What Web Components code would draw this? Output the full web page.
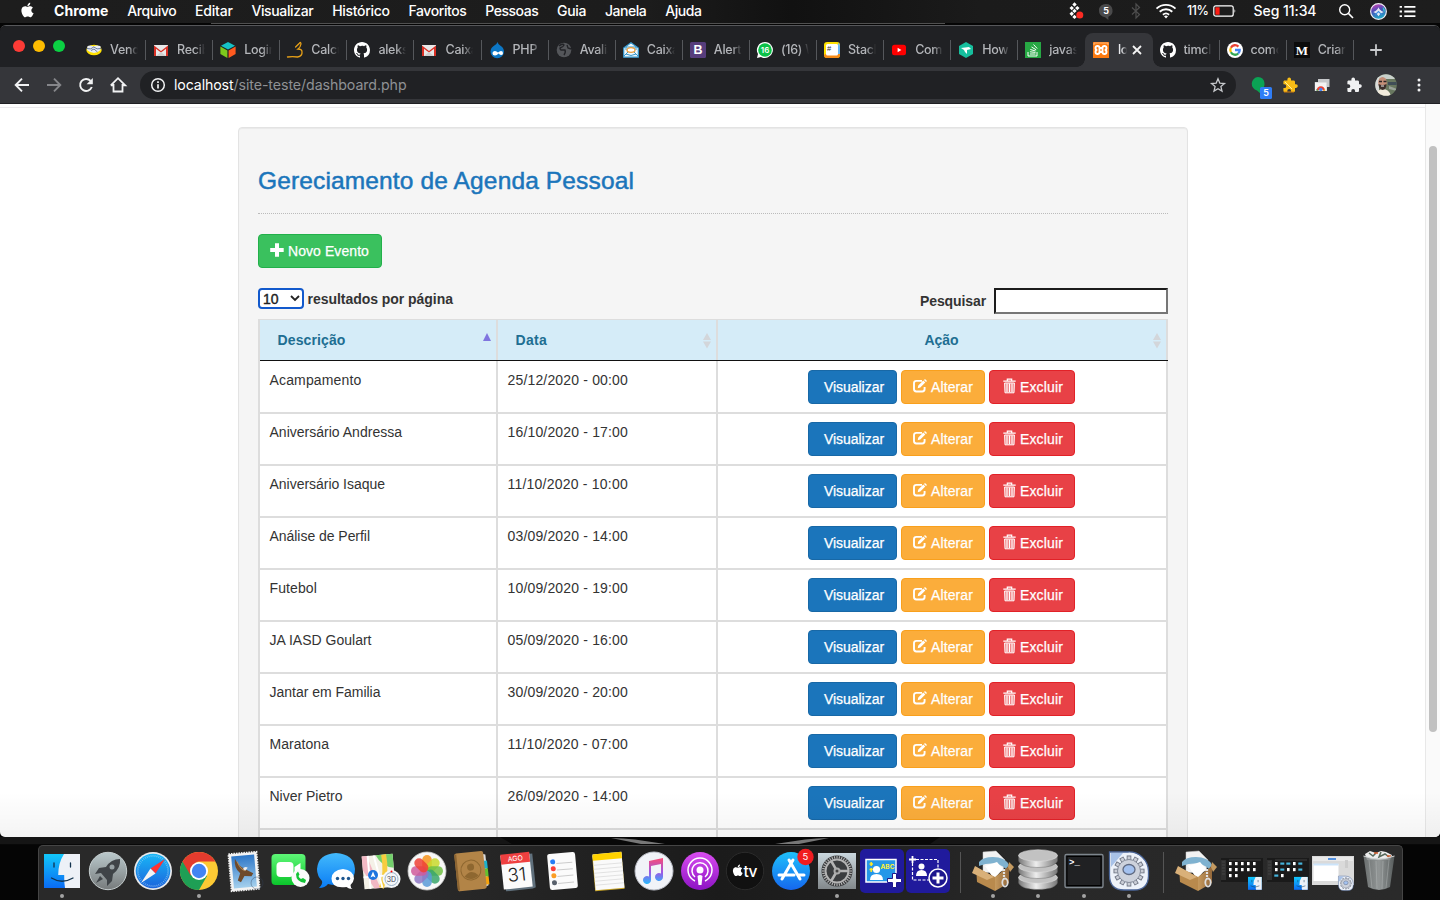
<!DOCTYPE html>
<html lang="pt-BR">
<head>
<meta charset="utf-8">
<title>Agenda Pessoal</title>
<style>
html,body{margin:0;padding:0;width:1440px;height:900px;overflow:hidden;background:#050505}
body{font-family:"Liberation Sans",Arial,sans-serif}
</style>
</head>
<body>
<mac-desktop></mac-desktop>
<script>
const MAC_FONT = 'Inter,"Liberation Sans",sans-serif';

const gmail = '<path d="M1 3h14v11H1z" fill="#e8e8e8"/><path d="M1 14V3.6L8 9l7-5.4V14h-2V6.8L8 10.6 3 6.8V14z" fill="#d93025"/><path d="M3 14h10L8 10z" fill="#cfcfcf"/>';
const github = '<path fill="#fff" d="M8 0C3.58 0 0 3.58 0 8c0 3.54 2.29 6.53 5.47 7.59.4.07.55-.17.55-.38v-1.49c-2.01.37-2.53-.49-2.69-.94-.09-.23-.48-.94-.82-1.13-.28-.15-.68-.52-.01-.53.63-.01 1.08.58 1.23.82.72 1.21 1.87.87 2.33.66.07-.52.28-.87.51-1.07-1.78-.2-3.64-.89-3.64-3.95 0-.87.31-1.59.82-2.15-.08-.2-.36-1.02.08-2.12 0 0 .67-.21 2.2.82A7.6 7.6 0 0 1 8 3.86c.68 0 1.36.09 2 .27 1.53-1.04 2.2-.82 2.2-.82.44 1.1.16 1.92.08 2.12.51.56.82 1.27.82 2.15 0 3.07-1.87 3.75-3.65 3.95.29.25.54.73.54 1.48v2.2c0 .21.15.46.55.38A8.01 8.01 0 0 0 16 8c0-4.42-3.58-8-8-8z"/>';
const puzzle = '<path d="M14 7.3h-1V4.8c0-.8-.6-1.4-1.4-1.4H9V2.3a1.8 1.8 0 0 0-3.6 0v1.1H2.7c-.8 0-1.3.6-1.3 1.4v2.5h1a1.9 1.9 0 0 1 0 3.8h-1v2.6c0 .8.6 1.3 1.3 1.3h2.6v-1a1.9 1.9 0 0 1 3.8 0v1h2.5c.8 0 1.4-.5 1.4-1.3v-2.8h1a1.8 1.8 0 0 0 0-3.6z"/>';
const apple = '<path d="M11.6 8.5c0-1.7 1.4-2.5 1.5-2.6-.8-1.2-2.1-1.4-2.5-1.4-1.1-.1-2.1.6-2.6.6-.6 0-1.400-.6-2.300-.6C4.500 4.500 3.400 5.200 2.800 6.200c-1.200 2.100-.3 5.200.9 6.900.6.8 1.300 1.800 2.200 1.700.9 0 1.200-.6 2.300-.6s1.400.6 2.300.6c1 0 1.600-.8 2.200-1.700.7-1 1-1.900 1-2-.1 0-2.100-.7-2.100-2.600zM9.900 3.400c.5-.6.8-1.400.7-2.200-.7 0-1.500.5-2 1.100-.5.500-.8 1.300-.7 2.100.7.1 1.500-.4 2-1z"/>';
const finderFace = (s='') => `<g ${s}><defs><linearGradient id="fa" x1="0" y1="0" x2="0" y2="1"><stop stop-color="#12c8fb"/><stop offset="1" stop-color="#0a6bf3"/></linearGradient></defs><path d="M4 5h36v34H4z" fill="url(#fa)"/><path d="M24 5h16v34H25q-1-6-.8-13h-6q0-12 5.800-21z" fill="#edf1f7"/><path d="M14 14v4M30.500 14v4" stroke="#12324e" stroke-width="1.300" stroke-linecap="round"/><path d="M11.500 29q10.500 6.500 21.500 0" fill="none" stroke="#12324e" stroke-width="1.300" stroke-linecap="round"/></g>`;
const petals = ['#f7941d','#c9d92c','#71bf44','#3aa66b','#5b9bd8','#8f78c6','#d05b9b','#ef4136'].map((c,i)=>`<rect x="17.200" y="6" width="9.600" height="16" rx="4.800" fill="${c}" opacity=".85" transform="rotate(${i*45} 22 22)"/>`).join('');
const ticks = (n,r1,r2,c,w)=>Array.from({length:n},(_,i)=>`<path d="M22 ${22-r1}V${22-r2}" stroke="${c}" stroke-width="${w}" transform="rotate(${i*360/n} 22 22)"/>`).join('');
const box = '<defs><linearGradient id="bx" x1="0" x2="1"><stop stop-color="#c69a5e"/><stop offset="1" stop-color="#94683a"/></linearGradient></defs><path d="M12 3l13-1 9 9-2 11-20 2z" fill="#f2f2f2" stroke="#c9c9c9" stroke-width=".5"/><path d="M8 13q4-5 14-5 12 0 16 8l-3 4q-10-9-27-3z" fill="#7fb2d0"/><path d="M14 17l12-4 6 7-9 10z" fill="#fff"/><path d="M5 18l19 10v14L6 33z" fill="#b98a4d"/><path d="M24 28l14-11v17L24 42z" fill="url(#bx)"/><path d="M4 17l19 11-7 3L1 24z" fill="#d9b079"/><path d="M38 13l5 5-4 5-2-5z" fill="#c49a60"/><path d="M33 20v10" stroke="#e2e2e2" stroke-width="2.200" stroke-dasharray="2 1"/><ellipse cx="34" cy="33.500" rx="2.700" ry="4" fill="none" stroke="#ddd" stroke-width="1.800"/>';
const cog = '<path d="M2.500 3H21A19.500 19.500 0 0 1 41.500 22V27Q41 41 27 41H17Q2.500 41 2.500 26z" fill="#edf2fa" stroke="#4b6699" stroke-width="1.300"/><path d="M4 4h12L4 18z" fill="#a8c2e8"/>'+ticks(12,15.500,11,'#6c7280',4.600)+ticks(12,14.600,10,'#c9cdd6',3)+'<circle cx="22" cy="22" r="11.500" fill="#cdd2dc" stroke="#747b8b" stroke-width=".8"/><ellipse cx="22" cy="20.500" rx="6" ry="5" fill="#a3c1ef" stroke="#5f6a82" stroke-width="1.300"/>';
const grid = blue => '<rect x="1" y="9" width="42" height="24" fill="#1a1a1a"/><path d="M1 11h5v20H1z" fill="#303030"/><path d="M2 13h3M2 16h3M2 19h3M2 22h3M2 25h3M9 11h32" stroke="#4a4a4a" stroke-width=".8"/>' +
  [0,1,2].map(r=>Array.from({length:r<2?5:2},(_,c)=>{const b=blue.includes(r*5+c);return `<rect x="${9+c*6-(b?.7:0)}" y="${13+r*6+(b?.5:0)}" width="${b?4:2.600}" height="${b?2.200:3.200}" fill="${b?'#45b4dc':'#fff'}"/>`}).join('')).join('') + finderFace('transform="translate(26.500 26) scale(.38)"');

/* name: [viewBox, markup] */
const ICONS = {
 apple:['0 0 16 16','<g fill="#fff">'+apple+'</g>'],
 meli:['0 0 16 16','<ellipse cx="8" cy="8" rx="7.700" ry="5.300" fill="#ffe100"/><path d="M1.500 4q3-1.300 6 .5 3-1.800 7-.5v4q-3 3-6.500 3T1 8z" fill="#e9edf5"/><path d="M.8 6.500q4 1.500 7-1.500 3 3 7.400 1.500M5 8.500l3-1.500 3.500 3" fill="none" stroke="#4a618c" stroke-width=".8"/>'],
 gmail:['0 0 16 16',gmail],
 cube:['0 0 16 16','<path d="M8 0l7 3.700-7 3.900L1 3.700z" fill="#15c2c6"/><path d="M.4 4.400l7 4v7.500l-7-4z" fill="#7ec81c"/><path d="M15.600 4.400l-7 4v7.500l7-4z" fill="#ff5a1f"/>'],
 calc:['0 0 16 16','<path d="M.5 15q5-.8 10 0 5-1 4.500-5 0-3-4-3 2.500-2 3-5-.2-2.500-1.600-.8L8.600 5" fill="none" stroke="#e59f18" stroke-width="1.300" stroke-linecap="round"/>'],
 github:['0 0 16 16',github],
 drupal:['0 0 16 16','<path d="M8.500 0q.5 2.300 3.300 4Q15 6 15 9.800A6.600 6.200 0 0 1 1.500 9.800Q1.500 6 5 3.800 8 2 8.500 0z" fill="#0c76c4"/><path d="M3.500 11.500q0-2.500 2.500-2.500 1.500 0 3 1.500Q10.500 9 12 9q2 0 2 2.200 0 1.800-1.500 1.800-1.500 0-3-1.500-1.500 2-3.500 2-2.500 0-2.500-2z" fill="#fff"/>'],
 globe:['0 0 16 16','<circle cx="8" cy="8" r="7.300" fill="#54565a"/><path d="M3 4q4-3 5-1-1 2-3 2.500t0 2.500h4q1 2-1 5M11 3l1 3 3 1" stroke="#222327" fill="none" stroke-width="1.400"/>'],
 mail:['0 0 16 16','<path d="M.7 6L8 .8 15.300 6v9.200H.7z" fill="#eef8fd" stroke="#3596cc" stroke-width="1.200"/><path d="M3 8V5h10v3M1 14l4-4m10 4l-4-4" stroke="#3596cc" fill="none"/><ellipse cx="8" cy="8" rx="4" ry="2.300" fill="#fff" stroke="#eb9d3c" stroke-width="1.300"/><path d="M3 12q5 3 10 0" stroke="#3596cc" fill="none"/>'],
 boot:['0 0 16 16','<rect width="16" height="16" rx="1.500" fill="#563d7c"/><text x="8" y="12.300" font-size="12.500" font-weight="700" text-anchor="middle" fill="#fff" font-family="Liberation Sans">B</text>'],
 whats:['0 0 16 16','<path d="M8 0a8 8 0 1 1-4 15L0 16l1-4A8 8 0 0 1 8 0z" fill="#fff"/><circle cx="8" cy="8" r="6.800" fill="#0bc148"/><text x="8" y="11" font-size="8" font-weight="600" text-anchor="middle" fill="#fff" font-family="Inter">16</text>'],
 stackh:['0 0 16 16','<rect width="16" height="16" rx="3" fill="#ffe100"/><path d="M3 16a3 3 0 0 1-3-3l3-2h13v2a3 3 0 0 1-3 3z" fill="#f58a17"/><path d="M14 1q2 1 2 3v8h-2z" fill="#67b6f3"/><rect x="2" y="2" width="12" height="11.500" rx="1.500" fill="#fff"/><text x="3" y="9" font-size="7.500" fill="#333" font-family="Liberation Sans">#</text>'],
 yt:['0 0 16 16','<rect x="1" y="2.700" width="14" height="10.600" rx="2.500" fill="#f00"/><path d="M6.600 5.700v4.600L10.400 8z" fill="#fff"/>'],
 how:['0 0 16 16','<path d="M8 0l7 4v8l-7 4-7-4V4z" fill="#16bf9d"/><path d="M3 6l8-1 2 2-4 1v4L7 10l-1-2z" fill="#fff"/>'],
 so:['0 0 16 16','<path d="M0 0h16v16H0z" fill="#27a844"/><path d="M3 10v4h9v-4M5 12h5.500M5 9.800l5.500.6M5.300 7.500l5.300 1.500M6.500 5l4.700 2.800M8.500 2.500l3.700 4" fill="none" stroke="#fff" stroke-width="1"/>'],
 xampp:['0 0 16 16','<path d="M0 0h16v16H0z" fill="#fb7a10"/><path d="M1 3V1h14v2" stroke="#ffc793" fill="none" stroke-width=".8"/><path d="M6.500 6v4h3V6zM6.500 6a2 2 0 1 0-2.300 2 2 2 0 1 0 2.300 2M9.500 6a2 2 0 1 1 2.300 2 2 2 0 1 1-2.300 2" fill="none" stroke="#fff" stroke-width="1.900"/>'],
 google:['0 0 16 16','<circle cx="8" cy="8" r="8" fill="#fff"/><g fill="none" stroke-width="2.300"><path d="M11.400 4.600A4.700 4.700 0 0 0 3.900 5.700" stroke="#ea4335"/><path d="M3.900 5.700a4.700 4.700 0 0 0 0 4.600" stroke="#fbbc05"/><path d="M3.900 10.300a4.700 4.700 0 0 0 7.300 1.200" stroke="#34a853"/><path d="M11.200 11.500A4.500 4.500 0 0 0 12.700 8H8" stroke="#4285f4"/></g>'],
 medium:['0 0 16 16','<path d="M0 0h16v16H0z" fill="#0b0b0b"/><text x="8" y="12.500" font-size="13" font-weight="700" text-anchor="middle" fill="#fff" font-family="Liberation Serif">M</text>'],
 plus:['0 0 16 16','<path d="M8 2.200v11.600M2.200 8h11.600" stroke="#c8cacd" stroke-width="1.800"/>'],
 x:['0 0 14 14','<path d="M3 3l8 8m0-8l-8 8" stroke="#f4f4f4" stroke-width="1.800"/>'],
 back:['0 0 16 16','<path d="M15 8H2M8 1.700L1.700 8 8 14.300" fill="none" stroke="#f1f2f3" stroke-width="1.900"/>'],
 fwd:['0 0 16 16','<path d="M1 8h13M8 1.700L14.300 8 8 14.300" fill="none" stroke="#85868a" stroke-width="1.900"/>'],
 reload:['0 0 16 16','<path d="M13.800 10A6 6 0 1 1 12.600 3.900" fill="none" stroke="#f1f2f3" stroke-width="1.900"/><path d="M14.800 1v6.200H8.600z" fill="#f1f2f3"/>'],
 home:['0 0 16 16','<path d="M3.500 7v7.500h9V7M.8 8.300L8 1.200l7.200 7.100H12.500M3.500 8.300H.8" fill="none" stroke="#f1f2f3" stroke-width="1.800"/>'],
 info:['0 0 16 16','<circle cx="8" cy="8" r="6.300" fill="none" stroke="#f1f2f3" stroke-width="1.500"/><path d="M8 7.200v4.300M8 4.300v1.700" stroke="#f1f2f3" stroke-width="1.700"/>'],
 star:['0 0 16 16','<path d="M8 1.800l1.800 4.300 4.700.4-3.600 3.100 1.100 4.500L8 11.700l-4 2.400 1.100-4.500-3.600-3.100 4.700-.4z" fill="none" stroke="#c7c9cc" stroke-width="1.300"/>'],
 green:['0 0 22 22','<path d="M7 0a6.800 6.800 0 0 1 2 13.200L10 17 6 13.400A6.800 6.800 0 0 1 7 0z" fill="#0ba354"/><rect x="9" y="10" width="12" height="12" rx="1.500" fill="#2f7df6"/><text x="15" y="19.300" font-size="9" font-weight="600" text-anchor="middle" fill="#fff" font-family="Inter">5</text>'],
 ypuzzle:['0 0 16 16','<g fill="#f9bd16">'+puzzle+'</g><path d="M3 5l7 7" stroke="#fff09a"/><path d="M2 15h10" stroke="#cf7d10"/>'],
 cards:['0 0 16 16','<path d="M4 2h11.500v8H13v4H.8V5H4z" fill="#c6c8ca"/><path d="M1 5.500h11.500v8.300H1z" fill="#f3f3f3"/><path d="M2.500 13.500a4.300 4.300 0 0 1 8.600 0H9a2.300 2.300 0 0 0-4.400 0z" fill="#ea4335"/><circle cx="6.800" cy="12.500" r="1.700" fill="#4285f4"/><path d="M2.500 13.800v-2l2 2z" fill="#34a853"/><path d="M11.100 13.800v-2l-2 2z" fill="#fbbc05"/>'],
 puzzle:['0 0 16 16','<g fill="#f0f1f2">'+puzzle+'</g>'],
 avatar:['0 0 22 22','<defs><clipPath id="c"><circle cx="11" cy="11" r="10.800"/></clipPath></defs><g clip-path="url(#c)"><path d="M0 0h22v22H0z" fill="#68775f"/><path d="M0 0h22v5H0z" fill="#c9d1cb"/><path d="M0 22V4l4-1v19z" fill="#d9dbd9"/><path d="M13 8h9v3h-9z" fill="#3f4d57"/><path d="M14 12l8 3v2l-8-2z" fill="#9aa39a"/><path d="M1 22q1-7 7-7t8 7z" fill="#f3ecdd"/><ellipse cx="7.500" cy="8.500" rx="4.300" ry="5.500" fill="#c58f78"/><path d="M3.500 10q4 2 8 0 0 5.500-4 6-4-1-4-6z" fill="#3d2f2b"/><path d="M4 7.500h3m1.500 0h3" stroke="#2a2424" stroke-width="1.500"/><path d="M6 12h3" stroke="#eee"/></g>'],
 dots:['0 0 16 16','<g fill="#f1f2f3"><circle cx="8" cy="3" r="1.500"/><circle cx="8" cy="8" r="1.500"/><circle cx="8" cy="13" r="1.500"/></g>'],
 tiles:['0 0 16 18','<g fill="#fff"><path d="M5.500 .3l2.200 2.200-2.200 2.200-2.200-2.200zM2.700 3.900l2.200 2.200-2.200 2.200L.5 6.100zM8.300 3.900l2.200 2.200-2.200 2.200-2.200-2.200zM5.500 6.700l2.200 2.200-2.200 2.200-2.200-2.200zM2.700 9.500l2.200 2.200-2.200 2.200-2.200-2.200zM5.500 12.700l2.200 2.200-2.200 2.200-2.200-2.200z"/></g><circle cx="10.800" cy="13" r="3.500" fill="#fb2b23"/>'],
 badge5:['0 0 16 18','<path d="M8 1a7 7 0 0 1 2.500 13.500V18L7 15A7 7 0 0 1 8 1z" fill="#4a4a4b"/><text x="8" y="11.500" font-size="9.500" font-weight="700" text-anchor="middle" fill="#fff" font-family="Inter">5</text>'],
 bt:['0 0 12 16','<path d="M2 4.500l7.500 7L6 15V1l3.500 3.500-7.500 7" fill="none" stroke="#4e4e4e" stroke-width="1.200"/>'],
 wifi:['0 0 22 16','<g fill="none" stroke="#fff" stroke-width="1.900"><path d="M1.500 5.600a14 14 0 0 1 19 0M4.700 8.700a9.400 9.400 0 0 1 12.600 0M7.900 11.700a4.800 4.800 0 0 1 6.200 0"/></g><path d="M11 15.500l-2-2.200q2-1.500 4 0z" fill="#fff"/>'],
 battery:['0 0 24 14','<rect x=".8" y="1.800" width="19.400" height="10.400" rx="2" fill="none" stroke="#fff" stroke-width="1.200"/><rect x="2.400" y="3.300" width="4.200" height="7.400" fill="#ff1c13"/><path d="M21.500 5q1.800 2 0 4z" fill="#fff"/>'],
 search:['0 0 16 16','<circle cx="6.700" cy="6.700" r="5" fill="none" stroke="#fff" stroke-width="1.400"/><path d="M10.400 10.400l4.600 4.600" stroke="#fff" stroke-width="1.600"/>'],
 siri:['0 0 16 16','<defs><linearGradient id="s" x2=".3" y2="1"><stop stop-color="#e23bb0"/><stop offset=".5" stop-color="#4a4fb8"/><stop offset="1" stop-color="#21a6c6"/></linearGradient></defs><circle cx="8" cy="8" r="7.400" fill="url(#s)" stroke="#ededf4" stroke-width="1.100"/><path d="M12 3.500q2.500 2 2 5-2-1-2-5z" fill="#35d3cb"/><path d="M8 4q1 3 5 4.500-3.500 1-5 4-1.500-3-5-4Q7 7 8 4z" fill="#fff" opacity=".85"/><path d="M5 11l3-3 3 3" stroke="#3c8fe0" fill="none"/>'],
 list:['0 0 18 14','<path d="M5 2h12M5 7h12M5 12h12" stroke="#fff" stroke-width="2"/><path d="M0 2h2.500M0 7h2.500M0 12h2.500" stroke="#fff" stroke-width="2"/>'],
 gplus:['0 0 14 14','<path d="M5 .2h4V5h4.700v4H9v4.800H5V9H.2V5H5z" fill="#fff"/>'],
 gedit:['0 0 14 14','<path d="M9 1.900H3.400Q1 1.900 1 4.200v5.900q0 2.400 2.400 2.400h5.900q2.300 0 2.300-2.400V8" fill="none" stroke="#fff" stroke-width="1.900"/><path d="M5.300 6.600l5-5 2 2-5 5-2.600.6zM11 1l1-1 2 2-1 1z" fill="#fff"/>'],
 gtrash:['0 0 13 16','<path d="M.3 3.200h12.400M4.300 2.700V1.200h4.400v1.500" fill="none" stroke="#fff" stroke-width="1.200"/><path d="M1.600 5h9.800l-.4 9.800H2z" fill="#fff" fill-opacity=".35" stroke="#fff" stroke-width="1"/><path d="M4 5.500v8.500M6.500 5.500v8.500M9 5.500v8.500" stroke="#fff" stroke-width="1.100"/>'],
 chev:['0 0 10 8','<path d="M1 2l4 4 4-4" fill="none" stroke="#222" stroke-width="1.800"/>'],
 /* dock */
 finder:['0 0 44 44',finderFace()],
 rocket:['0 0 44 44','<defs><linearGradient id="r" x1="0" y1="0" x2="0" y2="1"><stop stop-color="#bac9cc"/><stop offset="1" stop-color="#777b7c"/></linearGradient></defs><circle cx="22" cy="22" r="18.700" fill="url(#r)" stroke="#c4cccd" stroke-width="1"/><path d="M34 10q-9 0-14 8l-7 1-4 6 6-1 6 7 0 6 5-5 1-7q8-6 7-15z" fill="#3f4448"/><path d="M14 27l-4 7 7-4z" fill="#3f4448"/><circle cx="26" cy="18" r="2.500" fill="#96a0a3"/>'],
 safari:['0 0 44 44','<defs><linearGradient id="sf" x1="0" y1="0" x2="0" y2="1"><stop stop-color="#18b7f7"/><stop offset="1" stop-color="#1c64dc"/></linearGradient></defs><circle cx="22" cy="22" r="19" fill="#e9eaec"/><circle cx="22" cy="22" r="17.300" fill="url(#sf)"/>'+ticks(48,16,14.3,'#b9e2fa',.5)+'<path d="M34 10L24.500 24.500l-5-5z" fill="#f33"/><path d="M10 34l9.500-14.500 5 5z" fill="#f4f4f4"/>'],
 chrome:['0 0 44 44','<circle cx="22" cy="22" r="19" fill="#fcc934"/><path d="M22 22L5.500 12.500A19 19 0 0 0 22 41l8-14z" fill="#1e9f55"/><path d="M5.500 12.500A19 19 0 0 1 38.500 12.500H22q-6 0-8.200 14.200z" fill="#e33b2e"/><circle cx="22" cy="22" r="9" fill="#fff"/><circle cx="22" cy="22" r="7.200" fill="#4284f3"/>'],
 stamp:['0 0 44 44','<defs><linearGradient id="st" x1="0" y1="0" x2="0" y2="1"><stop stop-color="#2d77c8"/><stop offset="1" stop-color="#a5d0ed"/></linearGradient></defs><g transform="rotate(-5 22 22)"><rect x="8" y="4" width="28" height="37" fill="#f3f3f3" stroke="#f3f3f3" stroke-width="2" stroke-dasharray="1.500 1"/><rect x="10.500" y="6.500" width="23" height="32" fill="url(#st)"/><path d="M14 9q3 8 9 11l8 5-2 3-7-1-4 6-3-2 3-7q-6-6-4-15z" fill="#6e4a2c"/><path d="M21 20q2-3 5-1l-3 3z" fill="#eee"/><path d="M16 12q2 7 7 10" stroke="#b18a58" fill="none"/></g><circle cx="35" cy="34" r="6" fill="none" stroke="#33425a" opacity=".4"/>'],
 facetime:['0 0 44 44','<defs><linearGradient id="ft" x1="0" y1="0" x2="0" y2="1"><stop stop-color="#5ef777"/><stop offset="1" stop-color="#0bc52b"/></linearGradient></defs><rect x="3.500" y="5" width="34" height="31" rx="4" fill="url(#ft)"/><rect x="8.500" y="13" width="17" height="15" rx="4" fill="#fff"/><path d="M26.500 18l6-4v13l-6-4z" fill="#fff"/><circle cx="32.500" cy="29" r="9" fill="#fafafa"/><path d="M28 25q0 8 9 9l1-3-3-2-2 1q-2-1-2.500-3l1-1.500-1.500-3z" fill="#12c436"/>'],
 messages:['0 0 44 44','<defs><linearGradient id="ms" x1="0" y1="0" x2="0" y2="1"><stop stop-color="#43bafc"/><stop offset="1" stop-color="#0a7cf5"/></linearGradient></defs><path d="M22 4q18 1 19 16 0 15-19 16-5 0-8-1-3 4-9 4 4-4 3-7Q3 27 3 20 4 5 22 4z" fill="url(#ms)"/><path d="M29 20q10.500 1 11 9.500-.5 4-3.500 6.500 0 3 2 4-4 0-6-2-15 2-15-8.500Q18 21 29 20z" fill="#fff"/><g fill="#1d568f"><circle cx="23.500" cy="29.500" r="1.700"/><circle cx="29" cy="29.500" r="1.700"/><circle cx="34.500" cy="29.500" r="1.700"/></g>'],
 maps:['0 0 44 44','<g transform="rotate(-5 20 22)"><rect x="4" y="6" width="31" height="33" fill="#f4f1e7"/><path d="M4 6h5l11 33h-6L4 20z" fill="#f2b8c4"/><path d="M18 6h17v14q-12-2-17-14z" fill="#74cf6c"/><path d="M26 6q2 18-5 33" stroke="#f7cc40" stroke-width="5" fill="none"/><path d="M10 6v33M16 6l6 33" stroke="#fff" stroke-width="2"/><path d="M4 27h31" stroke="#fff" stroke-width="2"/></g><circle cx="14" cy="26" r="5" fill="#1c74df"/><path d="M14 22.500l2.500 6-2.500-1.200-2.500 1.200z" fill="#fff"/><circle cx="32.500" cy="30" r="9" fill="#f5f7f9"/><circle cx="32.500" cy="30" r="6.500" fill="none" stroke="#9db3c8"/><text x="32.500" y="32.500" font-size="7" text-anchor="middle" fill="#445" font-family="Inter">3D</text><circle cx="32.500" cy="22.500" r="1" fill="red"/>'],
 photos:['0 0 44 44','<circle cx="22" cy="22" r="19" fill="#f8f8f8" stroke="#c9c9c9" stroke-width=".8"/>'+petals],
 contacts:['0 0 44 44','<g transform="rotate(-6 22 22)"><path d="M31 5l6 2v31l-6 2z" fill="#ddd"/><path d="M32 13h6v8h-6z" fill="#1cb1cb"/><path d="M32 21h6v8h-6z" fill="#63c12f"/><path d="M32 29h6v8h-6z" fill="#f7a40c"/><rect x="6" y="3" width="29" height="38" rx="2" fill="#b28447"/><path d="M7 4v36" stroke="#8b6432" stroke-width="2"/><circle cx="21" cy="21" r="10" fill="none" stroke="#8e6730" stroke-width="1"/><circle cx="21" cy="18" r="3.500" fill="#8e6730"/><path d="M14 27q7-8 14 0-7 6-14 0z" fill="#8e6730"/></g>'],
 calendar:['0 0 44 44','<g transform="rotate(-6 22 22)"><path d="M8 6h30v34l-3 1H8z" fill="#60707c"/><rect x="6" y="5" width="29" height="34" fill="#fbfbfb"/><rect x="6" y="4" width="29" height="10" fill="#ef4040"/><text x="20.500" y="11.800" font-size="7" fill="#fff" text-anchor="middle" font-family="Inter">AGO</text><text x="20.500" y="32" font-size="18.500" font-weight="300" fill="#222" text-anchor="middle" font-family="Inter">31</text></g>'],
 reminders:['0 0 44 44','<g transform="rotate(-5 22 22)"><rect x="7.500" y="4" width="28" height="36" rx="2.500" fill="#fbfbfb"/><path d="M16 14h16M16 20.500h16M16 27h16M16 34h16" stroke="#ccc"/><circle cx="12.500" cy="12" r="2.500" fill="#257cf5"/><circle cx="12.500" cy="19" r="2.500" fill="#fb3f38"/><circle cx="12.500" cy="26" r="2.500" fill="#fb9d24"/><circle cx="12.500" cy="33" r="2.500" fill="#59616c"/></g>'],
 notes:['0 0 44 44','<g transform="rotate(-5 22 22)"><rect x="6.500" y="5" width="29.500" height="36" fill="#c9a526"/><rect x="7" y="4" width="29" height="36" fill="#fafafa"/><path d="M7 4h29v6.500H7z" fill="#ffd200"/><path d="M7 15h29M7 19h29M7 23h29M7 27h29M7 31h29M7 35h29" stroke="#d8d8d8" stroke-width=".7"/></g>'],
 music:['0 0 44 44','<defs><linearGradient id="mu" x1="0" y1="0" x2="0" y2="1"><stop stop-color="#fa4b74"/><stop offset=".55" stop-color="#9d57e6"/><stop offset="1" stop-color="#27b9fb"/></linearGradient></defs><circle cx="22" cy="22" r="19" fill="#f1f3f8" stroke="#bcbfc8"/><path d="M17 12l14-3v19a4 4 0 1 1-2-3.500V15l-10 2v14a4 4 0 1 1-2-3.500z" fill="url(#mu)"/>'],
 podcasts:['0 0 44 44','<defs><linearGradient id="po" x1="0" y1="0" x2="0" y2="1"><stop stop-color="#d94cf0"/><stop offset="1" stop-color="#8d14c4"/></linearGradient></defs><circle cx="22" cy="22" r="19" fill="url(#po)"/><g fill="none" stroke="#fff" stroke-width="1.500"><path d="M17 32a12 12 0 1 1 10 0"/><path d="M17 28a8 8 0 1 1 10 0"/></g><circle cx="22" cy="21" r="3.500" fill="#fff"/><path d="M19.500 27q2.500-2 5 0l-1 9h-3z" fill="#fff"/>'],
 tv:['0 0 44 44','<circle cx="22" cy="22" r="18.700" fill="#111" stroke="#2b2b2b"/><g fill="#fff" transform="translate(8 14.500) scale(.85)">'+apple+'</g><text x="20.500" y="27.500" font-size="15.500" font-weight="500" fill="#fff" font-family="Inter" letter-spacing="-.5">tv</text>'],
 appstore:['0 0 44 44','<defs><linearGradient id="as" x1="0" y1="0" x2="0" y2="1"><stop stop-color="#1fc1fb"/><stop offset="1" stop-color="#1567ee"/></linearGradient></defs><circle cx="22" cy="22" r="19" fill="url(#as)"/><path d="M24 11L13 30M20 11l11 19M10 26h15m4 0h6" stroke="#fff" stroke-width="3" stroke-linecap="round"/><circle cx="36.500" cy="8" r="8.200" fill="#f11c20"/><text x="36.500" y="11.300" font-size="9.500" fill="#fff" text-anchor="middle" font-family="Inter">5</text>'],
 settings:['0 0 44 44','<defs><linearGradient id="se" x1="0" y1="0" x2="0" y2="1"><stop stop-color="#cbd8df"/><stop offset="1" stop-color="#82888b"/></linearGradient></defs><rect x="3" y="4" width="38" height="36" fill="url(#se)"/><circle cx="22" cy="22" r="15.500" fill="#3b3d3f"/>'+ticks(36,15,12.5,'#bcbcbc',1)+'<circle cx="22" cy="22" r="11.500" fill="none" stroke="#b4b4b4" stroke-width="2"/><g stroke="#b4b4b4" stroke-width="2.500"><path d="M22 22h11M22 22l-5.500 9.500M22 22l-5.500-9.500"/></g><circle cx="22" cy="22" r="3.500" fill="#aaa"/><circle cx="22" cy="22" r="1.500" fill="#444"/>'],
 idcard:['0 0 44 44','<rect width="44" height="44" rx="5" fill="#201a9c"/><rect x="6" y="10.500" width="30" height="22.500" fill="#2597e8" stroke="#fff" stroke-width="1.500"/><circle cx="16.500" cy="20.500" r="3.600" fill="#fff"/><path d="M10 31q0-6 6.500-6t6.500 6z" fill="#fff"/><text x="20.500" y="20" font-size="6.500" font-weight="700" fill="#fff034" font-family="Inter">ABC</text><path d="M9.500 15h3.500M11.200 13v4M9.500 20.500h3.500M11.200 19v4" stroke="#ffe925" stroke-width="1.500"/><path d="M32.500 24.500h4v5h5v4h-5v5h-4v-5h-5v-4h5z" fill="#fff" stroke="#1d168d" stroke-width="1"/>'],
 idadd:['0 0 44 44','<rect width="44" height="44" rx="5" fill="#201a9c"/><path d="M6.500 14v17h17M10 10.500h22v12" fill="none" stroke="#fff" stroke-width="1.200" stroke-dasharray="3 1.500"/><path d="M3 10.500h7M6.500 7v7" stroke="#fff" stroke-width="1.800"/><circle cx="15.500" cy="17.500" r="3" fill="#fff"/><path d="M10 27q0-6 5.500-6t5.500 6z" fill="#fff"/><circle cx="32" cy="29" r="9" fill="#1d178f" stroke="#fff" stroke-width="1.500"/><path d="M26.500 29h11M32 23.500v11" stroke="#fff" stroke-width="3"/>'],
 box:['0 0 44 44',box],
 db:['0 0 44 44','<defs><linearGradient id="db"><stop stop-color="#777"/><stop offset=".45" stop-color="#eee"/><stop offset="1" stop-color="#777"/></linearGradient></defs>'+[31,20,9].map(y=>`<path d="M2.500 ${y-3}v6q3 6.500 19.500 6.500t19.500-6.500v-6z" fill="url(#db)" stroke="#555" stroke-width=".4"/><ellipse cx="22" cy="${y-2.5}" rx="19.500" ry="5.800" fill="#c2c2c2" stroke="#e0e0e0" stroke-width=".5"/>`).join('')],
 term:['0 0 44 44','<rect x="3" y="5.500" width="38" height="33" rx="1.500" fill="#191a1c" stroke="#7e868d" stroke-width="1.400"/><rect x="5" y="7.500" width="34" height="29" fill="#202123" stroke="#000"/><text x="7" y="15.500" font-size="9" font-weight="700" fill="#fff" font-family="Liberation Mono">&gt;_</text>'],
 cog:['0 0 44 44',cog],
 win1:['0 0 44 44',grid([])],
 win2:['0 0 44 44',grid([1,2,4,6,9,10])],
 win3:['0 0 44 44','<rect x="1" y="7" width="42" height="29" fill="#dadada"/><path d="M2 8h40v4H2z" fill="#e9e9e9"/><path d="M17 10h8" stroke="#2374dc" stroke-width="1.500"/><path d="M2.500 15h25v17h-25z" fill="#fff"/><path d="M2.500 14.500h25v2h-25z" fill="#cce4fa"/><path d="M34 11h3v8h-3z" fill="#ccc"/><g transform="translate(26.500 26) scale(.38)">'+cog+'</g>'],
 trash:['0 0 44 44','<defs><linearGradient id="tr"><stop stop-color="#777c7c"/><stop offset=".5" stop-color="#a4a9a9"/><stop offset="1" stop-color="#606666"/></linearGradient></defs><path d="M8 5l5-3 6 2 5-2 5 1 6 3-2 5H10z" fill="#eee"/><path d="M12 4l4 3 3-3M24 3l-2 5 6-3 4 3" stroke="#596a5c" fill="none" stroke-width="1.500"/><path d="M17 4h4M30 7h4" stroke="#d86030" stroke-width="1.500"/><path d="M6.500 7q15 6 31 0l-4.500 31q-11 6-22 0z" fill="url(#tr)" opacity=".85"/><path d="M12 11l3 28M19 12l1 28M26 12l-1 28M32 11l-3 28" stroke="#c6caca" stroke-width=".7" opacity=".5"/><path d="M6.500 7q15 6 31 0" stroke="#d2d5d5" fill="none"/>']
};

const make = (tag, render) => customElements.define(tag, class extends HTMLElement {
  constructor(){ super(); this.attachShadow({mode:'open'}); }
  connectedCallback(){ this.shadowRoot.innerHTML = render(this); }
});
const icon = (n,w,h=w,extra='') => `<ui-icon name="${n}" w="${w}" h="${h}" ${extra}></ui-icon>`;
const fit = (t,w,extra='') => `<fit-text w="${w}" ${extra}>${t}</fit-text>`;

make('ui-icon', el => {
  const [vb,body] = ICONS[el.getAttribute('name')];
  const w = el.getAttribute('w'), h = el.getAttribute('h');
  return `<style>:host{display:block;flex:none;width:${w}px;height:${h}px}svg{display:block;overflow:visible}</style><svg width="${w}" height="${h}" viewBox="${vb}">${body}</svg>`;
});

make('mac-menubar', () => `<style>
:host{display:flex;align-items:center;height:23px;box-sizing:border-box;padding:0 23px 0 19px;background:linear-gradient(90deg,#1d1d1d 0,#1c1c1c 45%,#111 55%,#1b1b1b 68%,#1d1d1d);color:#fff;font:500 14px/22px ${MAC_FONT}}
.left{display:flex;gap:18.800px;margin-left:18px}
.b{font-weight:700}
.right{display:flex;align-items:center;margin-left:auto}
</style>${icon('apple',17,18,'style="margin-top:-2px"')}
<div class="left">${fit('Chrome',54.5,'class="b"')}${[['Arquivo',49],['Editar',37.5],['Visualizar',62],['Histórico',57.5],['Favoritos',58],['Pessoas',53],['Guia',29],['Janela',41.5],['Ajuda',36.5]].map(a=>fit(...a)).join('')}</div>
<div class="right">${icon('tiles',16,18)}${icon('badge5',16,17,'style="margin-left:13px"')}${icon('bt',12,16,'style="margin-left:16px"')}${icon('wifi',22,16,'style="margin-left:13px"')}${fit('11%',21.5,'style="margin-left:10.500px;font-size:12.500px"')}${icon('battery',24,14,'style="margin-left:4px"')}${fit('Seg 11:34',63,'style="margin-left:17px"')}${icon('search',16,16,'style="margin-left:21px"')}${icon('siri',17,17,'style="margin-left:16.500px"')}${icon('list',18,13,'style="margin-left:12px"')}</div>`);

make('chrome-tab', el => {
  const on = el.hasAttribute('active'), noSep = el.hasAttribute('nosep');
  return `<style>
:host{display:flex;align-items:center;flex:none;width:67.1px;height:34px;box-sizing:border-box;padding-left:7px;position:relative;color:#b4b6ba;font:450 12.5px/16px ${MAC_FONT};
${on?'background:#35363a;border-radius:8px 8px 0 0;color:#e8eaed;padding-left:7.500px;':''}}
.t{margin-left:${on?'9px':'8px'};width:${on?'9px':'28px'};overflow:hidden;white-space:nowrap;letter-spacing:-.25px;-webkit-mask-image:linear-gradient(90deg,#000 ${on?'40%':'65%'},transparent)}
.sep{margin-left:auto;width:1px;height:20px;background:${on||noSep?'transparent':'#55575b'}}
.close{margin-left:3.500px}
${on?':host::before,:host::after{content:"";position:absolute;bottom:0;width:8px;height:8px}:host::before{left:-8px;background:radial-gradient(circle at 0 0,transparent 7.500px,#35363a 8px)}:host::after{right:-8px;background:radial-gradient(circle at 100% 0,transparent 7.500px,#35363a 8px)}':''}
</style>${icon(el.getAttribute('icon'),16)}<span class="t"><slot></slot></span>${on?icon('x',14,14,'class="close"'):''}<i class="sep"></i>`;
});

make('chrome-tabs', () => `<style>
:host{display:flex;align-items:flex-end;height:41px;background:#202124;box-sizing:border-box}
.lights{display:flex;gap:8px;width:66px;padding-left:13px;height:42px;align-items:center;flex:none}
.lights i{width:12px;height:12px;border-radius:50%;flex:none}
.plus{margin:0 0 9px 14.500px}
</style><div class="lights"><i style="background:#fc3b36"></i><i style="background:#fdbc01"></i><i style="background:#0bd043"></i></div>
${[['meli','Vend'],['gmail','Recib'],['cube','Login'],['calc','Calcu'],['github','aleks'],['gmail','Caixa'],['drupal','PHP'],['globe','Avalia'],['mail','Caixa'],['boot','Alerts'],['whats','(16) W'],['stackh','Stack'],['yt','Como'],['how','How'],['so','javas','nosep'],['xampp','loc','active'],['github','timcl'],['google','como'],['medium','Criar']].map(([i,t,f])=>`<chrome-tab icon="${i}" ${f||''}>${t}</chrome-tab>`).join('')}${icon('plus',16,16,'class="plus"')}`);

make('chrome-toolbar', () => `<style>
:host{display:flex;align-items:center;height:37px;box-sizing:border-box;padding:1px 13.500px 0 14px;background:#35363a;border-bottom:1px solid #202024;font:400 14.200px/20px ${MAC_FONT}}
.nav{display:flex;gap:16px}
.url{display:flex;align-items:center;width:1096px;height:28px;box-sizing:border-box;border-radius:14px;background:#202124;margin-left:14px;padding:0 10px;color:#8f9195}
.url fit-text:first-of-type{margin-left:8px;color:#fff}
.star{margin-left:auto}
.ext{display:flex;align-items:center;margin-left:15px}
</style><div class="nav">${['back','fwd','reload','home'].map(n=>icon(n,16)).join('')}</div>
<div class="url">${icon('info',16)}${fit('localhost',59.5)}${fit('/site-teste/dashboard.php',173)}${icon('star',16,16,'class="star"')}</div>
<div class="ext">${icon('green',22,22,'style="margin-top:5px"')}${icon('ypuzzle',16,16,'style="margin-left:9px"')}${icon('cards',16,16,'style="margin-left:16px"')}${icon('puzzle',16,16,'style="margin-left:16px"')}${icon('avatar',22,22,'style="margin-left:13px"')}${icon('dots',16,16,'style="margin-left:14px"')}</div>`);

const BTN = {
  view:['#1b75bb','#1868a6',89,15,'Visualizar',60,''],
  edit:['#fbad3b','#f9a01c',84,11,'Alterar',42,icon('gedit',14,14,'style="margin-right:4px;margin-top:-1px"')],
  del:['#e84146','#e22127',86,13,'Excluir',43,icon('gtrash',13,16,'style="margin-right:4px;margin-top:-2px"')],
  add:['#3ac15e','#22b04a',124,11,'Novo Evento',81,icon('gplus',14,14,'style="margin-right:4px;margin-top:-1px"')]
};
make('agenda-button', el => {
  const [bg,bd,w,p,t,tw,ic] = BTN[el.getAttribute('kind')];
  return `<style>:host{display:flex;flex:none;align-items:center;width:${w}px;height:34px;box-sizing:border-box;padding-left:${p}px;border:1px solid ${bd};border-radius:4px;background:${bg};color:#fff;font-size:14px;line-height:20px;-webkit-text-stroke:.25px #fff}</style>${ic}${fit(t,tw)}`;
});

make('sort-arrows', el => {
  const up = el.hasAttribute('asc');
  return `<style>:host{display:block;position:absolute;right:5.500px;top:13px;width:8px;height:16px}svg{display:block}</style><svg width="8" height="16">${up?'<path d="M0 8L4 0l4 8z" fill="#8075df"/>':'<path d="M0 7L4 0l4 7zM0 8.500h8L4 15.500z" fill="#d3d6da"/>'}</svg>`;
});

make('event-row', el => `<style>
:host{display:grid;grid-template-columns:238px 220px 450px;height:52px;background:#fff}
:host([first]){height:53px}
:host([first]) div{padding-top:9px}
div{box-sizing:border-box;border-right:2px solid #ddd;border-bottom:2px solid #ddd;padding:8px 9px 0 9.500px;line-height:20px}
.a{display:flex;justify-content:center;gap:4px;padding-left:8px;padding-right:9px}
</style><div>${fit(el.getAttribute('name'),el.getAttribute('nw'))}</div><div>${fit(el.getAttribute('date'),120.5)}</div>
<div class="a"><agenda-button kind="view"></agenda-button><agenda-button kind="edit"></agenda-button><agenda-button kind="del"></agenda-button></div>`);

make('event-table', () => `<style>
:host{display:block;border-left:2px solid #ddd}
.head{display:grid;grid-template-columns:238px 220px 450px;height:42px;box-sizing:border-box;border-top:1px solid #ddd;border-bottom:1px solid #111;background:#d5ecf8;color:#206e92;font-weight:700}
.head div{position:relative;border-right:2px solid #ddd;padding:10px 17px 0 17.500px;line-height:20px}
.head .c{padding:10px 1px 0 0;text-align:center}
</style><div class="head"><div>${fit('Descrição',68)}<sort-arrows asc></sort-arrows></div><div>${fit('Data',31.5)}<sort-arrows></sort-arrows></div><div class="c">${fit('Ação',34)}<sort-arrows></sort-arrows></div></div>
${[['Acampamento',92,'25/12/2020 - 00:00'],['Aniversário Andressa',132.5,'16/10/2020 - 17:00'],['Aniversário Isaque',115.5,'11/10/2020 - 10:00'],['Análise de Perfil',100.5,'03/09/2020 - 14:00'],['Futebol',47.5,'10/09/2020 - 19:00'],['JA IASD Goulart',102,'05/09/2020 - 16:00'],['Jantar em Familia',111,'30/09/2020 - 20:00'],['Maratona',59.5,'11/10/2020 - 07:00'],['Niver Pietro',73,'26/09/2020 - 14:00']].map(([n,w,d],i)=>`<event-row ${i?'':'first'} name="${n}" nw="${w}" date="${d}"></event-row>`).join('')}
<style>.rest{display:grid;grid-template-columns:238px 220px 450px;height:30px;background:#fff}.rest i{border-right:2px solid #ddd}</style><div class="rest"><i></i><i></i><i></i></div>`);

make('agenda-page', () => `<style>
:host{display:flex;position:relative;height:733px;background:#fff;overflow:hidden;color:#333;font-size:14px;line-height:20px}
.view{flex:1;border-top:1px solid #fff;box-sizing:border-box;display:flex;flex-direction:column}
.edge{height:2px;border-bottom:1px solid #eceaee;flex:none}
.card{width:950px;box-sizing:border-box;margin:19px 0 0 238px;border:1px solid #e3e3e3;border-radius:4px;background:#f5f5f5;padding:0 19px;height:760px;flex:none;box-shadow:inset 0 1px 1px rgba(0,0,0,.05)}
h1{margin:0;font-size:24.500px;font-weight:400;line-height:32px;padding:37px 0 16px;border-bottom:1px dotted #bbb;color:#1b75bb;-webkit-text-stroke:.5px #1b75bb}
.card>agenda-button{margin-top:20px}
.bar{display:flex;justify-content:space-between;align-items:flex-start;margin:20px 0 5px;font-weight:700}
.l,.r{display:flex;align-items:center}
.l{height:21px}
.l fit-text{padding-top:1px}
.sel{display:flex;align-items:center;justify-content:space-between;width:46px;height:21px;box-sizing:border-box;border:2px solid #1259cc;border-radius:4px;background:#fff;padding:0 2px 0 3px;margin-right:3.500px;font-weight:400;-webkit-text-stroke:.4px #222;color:#222}
.in{width:174px;height:26px;box-sizing:border-box;border:2px solid;border-color:#1c1c1c #767676 #767676 #1c1c1c;background:#fff;margin-left:8px}
.scroll{width:15px;box-sizing:border-box;border-left:1px solid #e8e8e8;background:#fafafa;padding:42px 0 0 3px;flex:none}
.scroll i{display:block;width:8px;height:586px;border-radius:4px;background:#c1c1c1}
.shade{position:absolute;left:0;right:0;bottom:0;height:45px;background:linear-gradient(transparent,rgba(0,0,0,.045));pointer-events:none}
</style><div class="view"><div class="edge"></div><section class="card"><h1>${fit('Gereciamento de Agenda Pessoal',376)}</h1><agenda-button kind="add"></agenda-button>
<div class="bar"><div class="l"><span class="sel">${fit('10',15.5)}${icon('chev',10,8)}</span>${fit('resultados por página',145.5)}</div><div class="r">${fit('Pesquisar',66)}<div class="in"></div></div></div>
<event-table></event-table></section></div><div class="scroll"><i></i></div><div class="shade"></div>`);

make('dock-item', el => `<style>:host{display:flex;flex-direction:column;align-items:center;flex:none;width:45.55px;padding-top:3px;box-sizing:border-box}i{width:4px;height:4px;border-radius:50%;background:#a3a3a3;margin-top:1px}</style>${icon(el.getAttribute('app'),44)}${el.hasAttribute('running')?'<i></i>':''}`);

make('mac-dock', () => `<style>
:host{display:flex;width:1365px;height:56px;box-sizing:border-box;margin:0 0 0 37.500px;padding-left:1px;border:1px solid #454545;border-bottom:0;border-radius:5px 5px 0 0;background:linear-gradient(90deg,#292929,#292929 28%,#1b1b1b 50%,#202020 60%,#282828 72%,#2a2a2a)}
.s{width:1px;height:41px;margin:6px 9.300px 0 9.300px;background:#555;flex:none}
.s.b{margin:6px 9.500px 0 11px}
</style>${['finder*','rocket','safari','chrome*','stamp','facetime','messages','maps','photos','contacts','calendar','reminders','notes','music','podcasts','tv','appstore','settings*','idcard','idadd','|','box*','db*','term*','cog*','||','box','win1','win2','win3','trash'].map(n=>n[0]==='|'?`<i class="s ${n[1]?'b':''}"></i>`:`<dock-item app="${n.replace('*','')}" ${n.endsWith('*')?'running':''}></dock-item>`).join('')}`);

make('mac-desktop', () => `<style>
:host{display:flex;flex-direction:column;width:1440px;height:900px;background:#050505;overflow:hidden}
.behind{height:2px;background:#050505;flex:none}
.behind i{display:block;width:734px;height:1px;margin-left:211px;background:#505050}
.win{height:812px;border-radius:6px 6px 5px 5px;overflow:hidden;box-sizing:border-box;border-top:1px solid #56575a;flex:none}
.gap{height:8px;background:#080808;flex:none}
.gap svg{display:block}
</style><mac-menubar></mac-menubar><div class="behind"><i></i></div>
<div class="win"><chrome-tabs></chrome-tabs><chrome-toolbar></chrome-toolbar><agenda-page></agenda-page></div>
<div class="gap"><svg width="1440" height="7"><path d="M0 0h500l12 7H0zM940 0h500v7H930z" fill="#151515"/><path d="M611 1q12 0 24 1.500l30 4.500h-24zM829 1q-12 0-24 1.500L775 7h24z" fill="#777"/></svg></div><mac-dock></mac-dock>`);

/* Spreads its text over a given advance width through letter-spacing. */
customElements.define('fit-text', class extends HTMLElement {
  constructor(){ super(); this.attachShadow({mode:'open'}).innerHTML='<style>:host{display:inline-block;white-space:nowrap;flex:none}span{display:inline-block;white-space:pre}</style><span><slot></slot></span>'; }
  connectedCallback(){
    const span = this.shadowRoot.querySelector('span'), w = +this.getAttribute('w');
    const natural = span.getBoundingClientRect().width;
    span.style.letterSpacing = ((w - natural) / this.textContent.length).toFixed(3) + 'px';
    this.style.width = w + 'px';
  }
});
</script>
</body>
</html>
